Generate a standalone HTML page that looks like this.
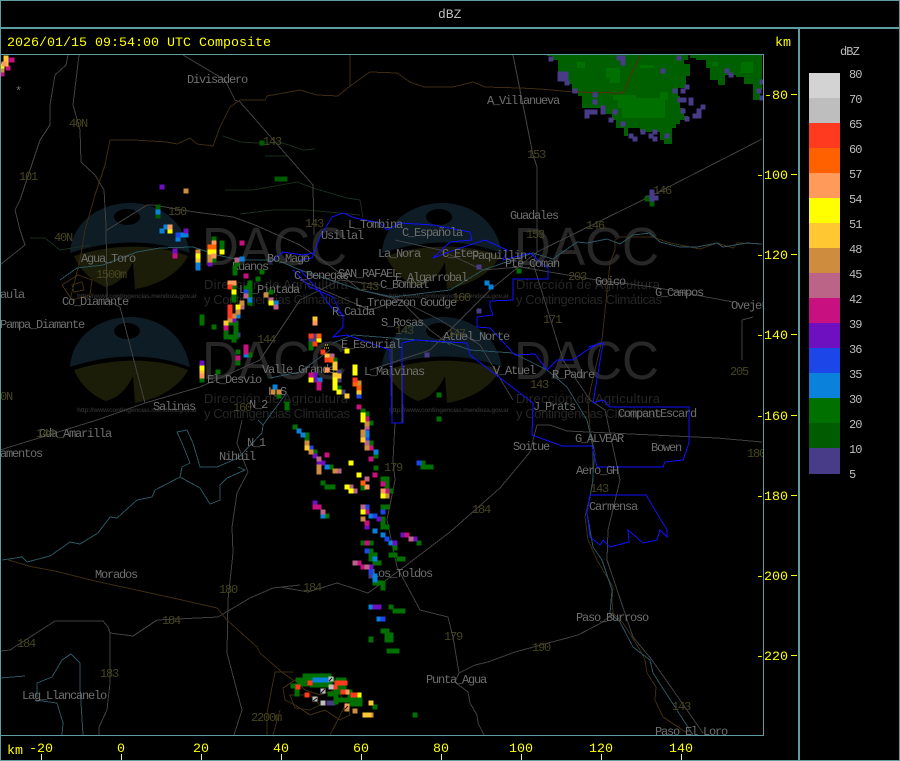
<!DOCTYPE html>
<html><head><meta charset="utf-8"><style>
html,body{margin:0;padding:0;background:#000;width:900px;height:761px;overflow:hidden}
svg{display:block}
.n{font:12px "Liberation Mono",monospace;letter-spacing:-1.2px;fill:#6f6f6f}
.c{font:12px "Liberation Mono",monospace;letter-spacing:-1.2px;fill:#45451f}
.y{font:13.33px "Liberation Mono",monospace;fill:#ffff00}
.l{font:12px "Liberation Mono",monospace;letter-spacing:-.9px;fill:#bdbdbd}
.d{font:54px "Liberation Sans",sans-serif;fill:#272727}
.s{font:13px "Liberation Sans",sans-serif;fill:#262626}
.u{font:bold 6.5px "Liberation Sans",sans-serif;fill:#2c2c2c}
</style></head><body>
<svg width="900" height="761" viewBox="0 0 900 761" xmlns="http://www.w3.org/2000/svg">
<rect width="900" height="761" fill="#000"/>
<svg x="1" y="55" width="762" height="680" viewBox="1 55 762 680">
<defs>
<g id="wm">
<path d="M70 253C72 222 100 203 130 203C160 203 185 222 190 253C150 238 110 240 70 253Z" fill="#0e1c25"/>
<ellipse cx="127" cy="217" rx="13" ry="8" fill="#000"/>
<path d="M74 256C110 244 155 243 188 256C180 272 160 285 135 289L133 262C127 275 118 284 106 287C92 282 80 270 74 256Z" fill="#1c1d08"/>
<text class="d" x="202" y="265" textLength="145" lengthAdjust="spacingAndGlyphs">DACC</text>
<text class="s" x="204" y="289" textLength="144">Dirección de Agricultura</text>
<text class="s" x="204" y="304" textLength="146">y Contingencias Climáticas</text>
<text class="u" x="77" y="298" textLength="120">http://www.contingencias.mendoza.gov.ar</text>
</g>
</defs>
<use href="#wm"/><use href="#wm" y="114"/><use href="#wm" x="312"/><use href="#wm" x="312" y="114"/>

<!-- radar top blobs -->
<g shape-rendering="crispEdges">
<path fill="#006000" d="M547 55H688V60H684V64H690V76H686V88H678V96H680V108H684V116H688V120H680V124H676V128H672V144H664V140H660V132H640V128H628V136H624V128H616V120H612V114H604V108H582V96H578V92H572V84H566V78H558V60H552V56H547Z"/>
<path fill="#007000" d="M577 62H585V68H577ZM606 68H620V83H610V78H606ZM640 65H653V68H640ZM613 95H636V98H660V92H668V100H665V118H622V108H618V100H613Z"/>
<path fill="#006000" d="M690 55H762V90H760V100H753V84H744V77H736V75H725V85H718V80H710V68H706V60H696V58H690Z"/>
<path fill="#007000" d="M741 62H753V73H741ZM712 62H718V66H712Z"/>
</g>

<g shape-rendering="crispEdges" fill="none" stroke-width="1">
<!-- contours -->
<g stroke="#1a2c1c">
<path d="M223 136L240 142L257 143L283 143L303 150L315 149"/><path d="M265 156H287"/><path d="M225 190L240 190L253 190L297 182L313 188L347 198L360 200L363 218"/>
<path d="M240 214L273 210L307 210L360 215"/><path d="M30 238L45 238L60 250L90 245"/>
</g>
<!-- grey lines -->
<g stroke="#404040">
<path d="M79 55L73 105L80 130L81 162L95 175L104 190L106 225L107 300L120 307L145 403"/>
<path d="M68 55L66 65L55 75L50 105L50 125L40 140L30 170L20 200L15 210L20 230L25 245L0 265"/>
<path d="M183 55L225 80L235 100L240 102L313 185L314 235"/>
<path d="M107 230L147 205L153 205L195 212L233 217L255 225L300 245L333 268L360 290L400 300L440 320L480 345L513 400"/>
<path d="M513 55L533 155L537 167L537 252L533 263L563 360L590 400L605 410L620 480L608 530L607 560L633 637L652 660L703 733"/>
<path d="M762 139L653 195L537 252L490 290L430 350L370 370"/>
<path d="M0 450L97 420L145 403L200 387L260 360L300 300L340 280L380 285"/>
<path d="M280 587L308 592L337 583L368 593L400 570L450 532L500 488L530 452L537 425L550 425L567 431L717 438L762 442"/>
<path d="M395 423L393 460L395 480L387 520L397 567L420 610L448 617L453 637L459 673L455 682L468 692L470 703L477 715L478 723L484 735"/>
<path d="M459 673L475 665L488 662L515 652L578 635L603 622L613 613"/>
<path d="M395 240L440 250L483 270L520 267L597 280L653 287L733 302"/><path d="M753 317L742 320V360"/>
<path d="M300 280L370 310L400 300L430 330L450 345"/>
<path d="M392 345V423M402 345V423"/>
<path d="M242 420L237 443L248 472L237 493L232 527L233 553L228 600L227 653L242 710L234 735"/>
<path d="M0 651L10 650L55 621L103 621L108 627L110 633L133 636L157 620L218 617L250 598L273 588L300 585"/>
<path d="M110 633V683L107 710L99 727V735"/>
</g>
<!-- brown -->
<g stroke="#3d2c10">
<path d="M70 300L80 260L85 230L95 195L100 180L105 165L110 140L134 140L167 142L177 144L190 138L197 144L213 146L220 127L230 107L240 100L265 100L267 96L300 90L317 95L338 96L350 86L370 72L397 73L410 82L424 87L453 87L473 82L485 87L520 88L540 89L573 92"/>
<path d="M350 55V86"/>
<path d="M615 240L620 237L653 237L670 243L700 249L717 243L733 248L737 243L762 244"/>
<path d="M615 240V250L610 263L602 340L588 400L590 430L595 453L592 487L585 517L588 540L597 560L613 587L612 600L613 613L623 623L640 650L645 660L647 673L656 687L655 700L663 717L687 733"/>
<path d="M8 560L33 567L55 571L95 581L173 598L217 608L227 620L257 647L260 653L283 673L293 680"/>
<path d="M267 735V713L275 672L293 672"/>
<path d="M283 688L295 680L305 690L320 695L335 690L345 700L350 715L340 720L325 710L310 715L295 705L285 700Z"/>
<path d="M290 695L310 695L320 705L310 710L295 708ZM280 710L273 735M348 700L330 735"/>
<path d="M62 285L78 275L92 280L90 295L72 300Z M72 285L82 282L84 290L74 292Z"/>
</g>
<path stroke="#5a2a10" d="M573 92L623 93L640 55"/>
<!-- teal -->
<g stroke="#2a5560">
<path d="M333 343L353 335L417 340L450 343L470 350L513 353L547 370L567 387L587 420L593 447L593 480L587 513L593 547L602 560L612 590L610 613L620 622L633 647L650 660L653 673L693 735"/>
<path d="M60 280L77 268L103 265L137 252L160 248L193 247L217 255L240 260L277 260L300 270L360 290L393 297L450 290L483 270L533 253L553 259L577 242L587 243L607 239L620 244L633 235L650 233L660 242L680 247L697 247L717 243L723 247L747 243L762 244"/>
<path d="M270 378L300 372L330 350M285 395L263 425"/>
<path d="M2 560L22 557L27 562L50 556L70 542L80 544L98 533L110 517L117 518L137 500L152 497L155 490L180 477L200 488L210 504L220 500L220 485L227 478L245 470L238 467"/>
<path d="M180 477L182 467L190 463L182 443L177 432L187 430L193 443L200 467L217 467L238 458L262 433L263 425L258 420"/>
<path d="M0 678L25 676M37 697L37 683L52 677L62 660L71 654L80 663L80 687L83 735M35 700L57 703L63 723L62 735"/>
</g>
<!-- blue -->
<g stroke="#1010ff">
<path d="M300 260L312 258L320 237L332 217L343 213L355 218L380 223L387 230L400 223L433 225L470 232L472 240L450 242L433 258L460 248L485 240L507 250L503 260L530 253L548 268L548 279L513 279L513 300L490 301L490 307L493 315L477 317L477 327L490 328L515 355L535 354L547 370L557 360L573 360L587 350L600 343"/>
<path d="M300 270L320 292L332 308L343 315L343 327L333 337L347 335L390 350L392 423L403 423L402 343L415 340L467 343L470 355L533 403L532 435L562 446L592 446L597 467L663 467L665 462L683 460L689 443L689 407L610 407L603 400L593 403L603 343L588 347"/>
<path d="M590 495L646 495L667 530L667 537L660 530L657 540L643 543L628 530L629 542L610 547L603 540L600 545L590 537L587 513Z"/>
<path d="M270 263L283 252L303 255L313 253M293 270L310 287L333 297L343 317"/>
</g>
</g>

<!-- labels -->
<text class="n" x="187" y="83">Divisadero</text><text class="n" x="487" y="104">A_Villanueva</text><text class="n" x="510" y="219">Guadales</text>
<text class="n" x="348" y="228">L_Tombina</text><text class="n" x="321" y="239">Usillal</text><text class="n" x="402" y="236">C_Española</text>
<text class="n" x="378" y="257">La_Nora</text><text class="n" x="442" y="257">C_Etep</text><text class="n" x="472" y="259">Paquillin</text>
<text class="n" x="505" y="267">Pte_Coman</text><text class="n" x="338" y="277">SAN_RAFAEL</text><text class="n" x="294" y="279">C_Benegas</text>
<text class="n" x="395" y="281">E_Algarrobal</text><text class="n" x="380" y="288">C_Bombal</text><text class="n" x="595" y="285">Goico</text>
<text class="n" x="655" y="296">G_Campos</text><text class="n" x="731" y="309">Ovejeria</text><text class="n" x="355" y="306">L_Tropezon</text><text class="n" x="420" y="306">Goudge</text>
<text class="n" x="332" y="315">R_Caida</text><text class="n" x="381" y="326">S_Rosas</text><text class="n" x="443" y="340">Atuel_Norte</text>
<text class="n" x="341" y="348">E_Escurial</text><text class="n" x="364" y="375">L_Malvinas</text><text class="n" x="493" y="374">V_Atuel</text>
<text class="n" x="552" y="378">R_Padre</text><text class="n" x="533" y="410">J_Prats</text><text class="n" x="618" y="417">CompantEscard</text>
<text class="n" x="575" y="442">G_ALVEAR</text><text class="n" x="651" y="451">Bowen</text><text class="n" x="513" y="450">Soitue</text>
<text class="n" x="576" y="474">Aero_GH</text><text class="n" x="589" y="510">Carmensa</text><text class="n" x="372" y="577">Los_Toldos</text>
<text class="n" x="576" y="621">Paso_Burroso</text><text class="n" x="426" y="683">Punta_Agua</text><text class="n" x="655" y="735">Paso_El_Loro</text>
<text class="n" x="95" y="578">Morados</text><text class="n" x="22" y="699">Lag_Llancanelo</text><text class="n" x="219" y="460">Nihuil</text>
<text class="n" x="247" y="446">N_1</text><text class="n" x="249" y="408">N_2</text><text class="n" x="153" y="410">Salinas</text>
<text class="n" x="39" y="437">Cda_Amarilla</text><text class="n" x="0" y="457">amentos</text><text class="n" x="0" y="328">Pampa_Diamante</text>
<text class="n" x="0" y="298">aula</text><text class="n" x="81" y="262">Agua_Toro</text><text class="n" x="62" y="305">Co_Diamante</text>
<text class="n" x="232" y="270">Ruanos</text><text class="n" x="267" y="262">Bo_Mago</text><text class="n" x="239" y="293">Ls_Pintada</text>
<text class="n" x="207" y="383">El_Desvio</text><text class="n" x="262" y="373">Valle_Grande</text><text class="n" x="268" y="395">N_S</text>
<text class="n" x="15" y="95">*</text>
<text class="c" x="69" y="127">40N</text><text class="c" x="19" y="180">101</text><text class="c" x="54" y="241">40N</text><text class="c" x="263" y="145">143</text>
<text class="c" x="168" y="215">150</text><text class="c" x="527" y="158">153</text><text class="c" x="526" y="238">153</text><text class="c" x="653" y="194">146</text>
<text class="c" x="586" y="229">146</text><text class="c" x="568" y="280">203</text><text class="c" x="305" y="227">143</text><text class="c" x="543" y="323">171</text>
<text class="c" x="395" y="334">143</text><text class="c" x="447" y="337">147</text><text class="c" x="452" y="301">160</text><text class="c" x="257" y="343">144</text>
<text class="c" x="530" y="388">143</text><text class="c" x="233" y="411">160</text><text class="c" x="384" y="471">179</text><text class="c" x="472" y="513">184</text>
<text class="c" x="303" y="591">184</text><text class="c" x="219" y="593">180</text><text class="c" x="162" y="624">184</text><text class="c" x="17" y="647">184</text>
<text class="c" x="100" y="677">183</text><text class="c" x="444" y="640">179</text><text class="c" x="532" y="651">190</text><text class="c" x="672" y="710">143</text>
<text class="c" x="590" y="492">143</text><text class="c" x="730" y="375">205</text><text class="c" x="251" y="721">2200m</text><text class="c" x="96" y="278">1500m</text>
<text class="c" x="0" y="400">0N</text><text class="c" x="747" y="457">180</text><text class="c" x="360" y="290">143</text><text class="c" x="36" y="437">144</text>

<!-- radar cells -->
<g fill="none" stroke-linecap="square" stroke-width="4.6" shape-rendering="crispEdges">
<path stroke="#483c88" d="M551 59h0M560 74h6v5h-6zM567 83h0M575 91h0M595 95h0M595 102h0M587 112h8M587 116h0M603 108v4M615 112h0M611 120h0M623 124h0M619 58h4v5M679 58h0M663 71h0M687 87h0M683 91h0M675 91h0M680 100h4M691 100v3M703 107h0M683 111h0M699 111v5M695 116h0M687 119h0M727 71h0M731 75h0M759 91h0M762 82h0M762 98h0M643 132h0M655 132h0M667 136h0M651 136h0M631 136h0M635 139h0M655 139h0M648 198h8M652 192v12M427 355h0M479 311h0M479 267h0M238 335h0M315 336h0M311 340h8M339 372h0M339 380h0M343 392h0M371 576h0M329 703h4"/>
<path stroke="#005c00" d="M262 143h0M277 179h8M158 207h0M158 216h0M647 199h0M652 204h0"/>
<path stroke="#007000" d="M214 239h0M222 243v6M210 260h0M214 260h0M237 264h0M235 268v5M262 272h0M258 279h0M234 288h0M234 296v4M250 283v20M246 288h0M271 292h0M202 317v6M214 327h0M226 323h10v14h-10zM234 340h0M238 352h0M250 355h0M238 363h0M202 380h0M218 372h0M279 396h0M287 404v4M295 427h0M311 344v4M335 360h0M339 388h0M363 412h0M367 415h0M371 423h0M439 395h0M439 419h0M519 271h0M307 435v4M315 452h0M331 467h0M363 411h0M367 414h0M371 443h0M376 456h0M376 468h0M323 483h0M327 487h6M363 488h0M383 479h4v12M391 491h0M327 516h0M383 507h4M383 519v8M387 527h0M395 548h0M419 543h0M363 543h0M371 543h0M371 551v8M375 555h0M375 563h4M391 555h4M399 559h4M379 583h4v5M375 583h0M423 463h0M423 467h8M391 607h0M395 611h8M383 631h4v4h4v5h-4M371 639h0M389 651h8M371 640h0M387 640h4M375 707h0M415 715h0M293 686h4v8M298 680h34M300 684h6M312 685h18M338 680h6M340 688h4M336 692h14v4M336 700h24M352 704h8M330 694h6v8M305 676h24"/>
<path stroke="#0a82dc" d="M158 212h0M162 231h0M166 227h0M182 235h4M178 239h0M198 264v4M242 259h0M214 256h0M250 300h0M276 303h0M238 316h0M246 355h0M275 387h0M320 380h0M487 283h0M491 287h0M299 431h0M303 435h0M367 432v4M376 452h0M327 467h0M323 516h0M371 516h0M375 531h0M383 535h0M391 543h0M375 559h0M375 576v4M371 607h0M379 619h0M315 680h12"/>
<path stroke="#1c46e8" d="M178 235h0M246 292h0M359 396h0M367 440h0M311 448h0M419 463h0M367 507h0M375 516h0M383 512h0M387 539h0M367 551h0M371 572h0M383 619h0"/>
<path stroke="#6e10c0" d="M162 187h0M186 231h0M8 60h0M175 251h0M210 264h0M234 320h0M202 363h0M315 375h0M315 380h0M319 463h0M367 428h0M315 456h0M323 463h0M315 503h0M367 527h0M379 519h0M395 543h0M403 535h0M415 539h0M371 567h0M375 607h4"/>
<path stroke="#c81080" d="M246 276h0M242 243h0M175 256h0M226 328h0M246 347v5M238 358h0M311 375h0M319 384v4M359 407h0M367 419h0M12 60h0M8 68h0M2 74h0M327 455h0M371 448h0M371 459h0M367 420h0M375 475h0M383 484h0M387 491h0M315 507h4M367 512h0M367 523h0M407 535h0M367 543h0M359 563h0M363 567h0"/>
<path stroke="#bc6488" d="M237 260h0M246 296h0M242 307h0M271 300h0M276 307h0M332 356h0M367 427h0M367 443h0M319 459h0M339 471h0M367 479h0M351 487h0M355 491h0M323 512h0M363 507h0M411 539h0M355 563h0M367 567h0"/>
<path stroke="#cd8c3e" d="M186 191h0M198 252h0M210 256v4M242 303h0M266 295h0M238 312h0M234 316h0M230 320h0M279 392h0M273 392h0M359 383h0M2 70h0M367 424h0M363 432v4M367 448h0M307 443h0M311 452h0M319 467v5M335 471h0M387 496h0M363 519h0M347 709h0M355 711h0M371 715h0"/>
<path stroke="#ffc832" d="M6 60h0M6 58v6M198 260h0M226 323h0M202 372h0M315 319h0M327 356h0M335 364v4M335 375h0M339 376h0M347 396h0M359 392h0M363 440h0M307 448h0M365 715h4M371 703h0"/>
<path stroke="#ffff00" d="M170 231h0M222 252h0M210 252h4M198 256h0M234 292h0M238 307h0M271 303h0M202 368h0M311 380h0M319 340h0M335 380v8M339 392h0M347 351h0M355 367v6M363 417h0M2 66h0M363 415v5M351 463h0M359 475h0M347 487h0M351 491h0M383 496h0M363 512h0M359 695h0"/>
<path stroke="#ff9a5a" d="M170 227h0M214 243h0M214 256h0M230 283h4M202 376h0M315 323h0M327 370h0M347 692h0M347 706h0M367 487h0M383 491h0M4 64h0"/>
<path stroke="#ff6000" d="M210 247h4M319 336h0M331 360h0M355 384h0M359 388h0M363 483h0"/>
<path stroke="#ff3a1e" d="M230 287h0M230 307v9M311 336h0M315 344h0M323 352h0M327 360h0M355 380h0M310 683h0M298 687h0M307 695h0M335 687h0M337 683h8M343 692h0M353 695h2"/>
<path stroke="#bebebe" d="M331 687h0M323 691h0M315 699h0M323 703h0M331 679h0"/>
</g>
<g fill="none" stroke="#111" stroke-width="1"><path d="M321 693l4-4M313 701l4-3M329 681l3-3M345 709l3-3"/></g>
<path fill="none" stroke="#ffff00" stroke-dasharray="1 1" d="M325 345h4M324 348h5"/>
</svg>

<!-- frame -->
<g fill="none" stroke="#5f9ea0" stroke-width="1" shape-rendering="crispEdges">
<rect x="0.5" y="0.5" width="899" height="760"/>
<path d="M0 27.5H900"/><path d="M798.5 28V761"/><path d="M1 54.5H763.5V735.5H1"/>
<path d="M0 28.5H900M799.5 28V761"/>
</g>
<text class="l" x="438" y="18" style="letter-spacing:0;font-size:13px">dBZ</text>
<text class="y" x="7" y="46">2026/01/15 09:54:00 UTC Composite</text>
<text class="y" x="775" y="46">km</text>
<text class="y" x="7" y="754">km</text>

<!-- axis ticks -->
<g stroke="#ffff00" stroke-width="1" shape-rendering="crispEdges">
<path d="M41.5 754V760M121.5 754V760M201.5 754V760M281.5 754V760M361.5 754V760M441.5 754V760M521.5 754V760M601.5 754V760M681.5 754V760"/>
<path d="M791 94.5H797M791 174.5H797M791 254.5H797M791 334.5H797M791 415.5H797M791 495.5H797M791 575.5H797M791 655.5H797"/>
</g>
<g>
<text class="y" x="29" y="752">-20</text><text class="y" x="117" y="752">0</text><text class="y" x="193" y="752">20</text><text class="y" x="273" y="752">40</text>
<text class="y" x="353" y="752">60</text><text class="y" x="433" y="752">80</text><text class="y" x="509" y="752">100</text><text class="y" x="589" y="752">120</text><text class="y" x="669" y="752">140</text>
<text class="y" x="764" y="99">-80</text><text class="y" x="756" y="179">-100</text><text class="y" x="756" y="259">-120</text><text class="y" x="756" y="339">-140</text>
<text class="y" x="756" y="420">-160</text><text class="y" x="756" y="500">-180</text><text class="y" x="756" y="580">-200</text><text class="y" x="756" y="660">-220</text>
</g>

<!-- colorbar -->
<g shape-rendering="crispEdges">
<rect x="809" y="73" width="31" height="25" fill="#d3d3d3"/><rect x="809" y="98" width="31" height="25" fill="#bebebe"/>
<rect x="809" y="123" width="31" height="25" fill="#ff3a1e"/><rect x="809" y="148" width="31" height="25" fill="#ff6000"/>
<rect x="809" y="173" width="31" height="25" fill="#ff9a5a"/><rect x="809" y="198" width="31" height="25" fill="#ffff00"/>
<rect x="809" y="223" width="31" height="25" fill="#ffc832"/><rect x="809" y="248" width="31" height="25" fill="#cd8c3e"/>
<rect x="809" y="273" width="31" height="25" fill="#bc6488"/><rect x="809" y="298" width="31" height="25" fill="#c81080"/>
<rect x="809" y="323" width="31" height="25" fill="#6e10c0"/><rect x="809" y="348" width="31" height="25" fill="#1c46e8"/>
<rect x="809" y="373" width="31" height="25" fill="#0a82dc"/><rect x="809" y="398" width="31" height="25" fill="#007000"/>
<rect x="809" y="423" width="31" height="25" fill="#005c00"/><rect x="809" y="448" width="31" height="26" fill="#483c88"/>
</g>
<g>
<text class="l" x="840" y="55">dBZ</text>
<text class="l" x="849" y="78">80</text><text class="l" x="849" y="103">70</text><text class="l" x="849" y="128">65</text><text class="l" x="849" y="153">60</text>
<text class="l" x="849" y="178">57</text><text class="l" x="849" y="203">54</text><text class="l" x="849" y="228">51</text><text class="l" x="849" y="253">48</text>
<text class="l" x="849" y="278">45</text><text class="l" x="849" y="303">42</text><text class="l" x="849" y="328">39</text><text class="l" x="849" y="353">36</text>
<text class="l" x="849" y="378">35</text><text class="l" x="849" y="403">30</text><text class="l" x="849" y="428">20</text><text class="l" x="849" y="453">10</text><text class="l" x="849" y="478">5</text>
</g>
</svg>
</body></html>
